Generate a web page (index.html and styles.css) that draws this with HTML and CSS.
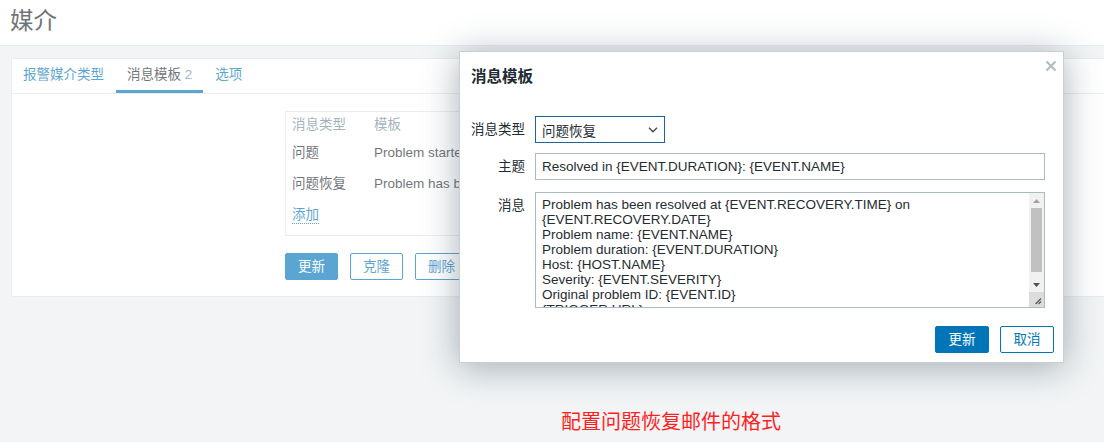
FILE: index.html
```html
<!DOCTYPE html>
<html lang="zh-CN">
<head>
<meta charset="utf-8">
<title>媒介</title>
<link rel="stylesheet" href="styles.css">
</head>
<body>
<header class="page-header">
  <h1 class="page-title">媒介</h1>
</header>
<main class="content">
  <section class="panel">
    <nav class="tabs">
      <a class="tab">报警媒介类型</a>
      <a class="tab tab-active">消息模板 <span class="tab-count">2</span></a>
      <a class="tab">选项</a>
    </nav>
    <div class="panel-body">
      <div class="tpl-box">
        <table class="tpl-table">
          <thead>
            <tr><th class="col-type">消息类型</th><th>模板</th></tr>
          </thead>
          <tbody>
            <tr><td>问题</td><td>Problem started at {EVENT.TIME}</td></tr>
            <tr><td>问题恢复</td><td>Problem has been resolved</td></tr>
            <tr><td colspan="2"><a class="link-add">添加</a></td></tr>
          </tbody>
        </table>
      </div>
      <div class="panel-buttons">
        <button class="btn btn-primary">更新</button>
        <button class="btn btn-alt">克隆</button>
        <button class="btn btn-alt">删除</button>
      </div>
    </div>
  </section>
</main>
<div class="overlay"></div>
<div class="dialog">
  <div class="dialog-head">
    <h2 class="dialog-title">消息模板</h2>
    <button class="dialog-close" aria-label="close">
      <svg width="12" height="12" viewBox="0 0 12 12"><path d="M1.5 1.5 L10.5 10.5 M10.5 1.5 L1.5 10.5" stroke="#b0b9c0" stroke-width="2" fill="none"/></svg>
    </button>
  </div>
  <div class="dialog-body">
    <label class="f-label">消息类型</label>
    <div class="f-field">
      <div class="select">
        <span>问题恢复</span>
        <svg class="chev" width="10" height="6" viewBox="0 0 10 6"><path d="M1 0.8 L5 4.8 L9 0.8" stroke="#3a4a55" stroke-width="1.3" fill="none"/></svg>
      </div>
    </div>
    <label class="f-label">主题</label>
    <div class="f-field">
      <input class="input" type="text" value="Resolved in {EVENT.DURATION}: {EVENT.NAME}">
    </div>
    <label class="f-label">消息</label>
    <div class="f-field">
      <div class="ta-wrap">
        <textarea class="textarea">Problem has been resolved at {EVENT.RECOVERY.TIME} on {EVENT.RECOVERY.DATE}
Problem name: {EVENT.NAME}
Problem duration: {EVENT.DURATION}
Host: {HOST.NAME}
Severity: {EVENT.SEVERITY}
Original problem ID: {EVENT.ID}
{TRIGGER.URL}</textarea>
        <div class="scrollbar" aria-hidden="true">
          <span class="sb-btn">
            <svg width="7" height="4" viewBox="0 0 7 4"><path d="M0 4 L3.5 0 L7 4 Z" fill="#a3a3a3"/></svg>
          </span>
          <span class="sb-track"><span class="sb-thumb"></span></span>
          <span class="sb-btn">
            <svg width="7" height="4" viewBox="0 0 7 4"><path d="M0 0 L3.5 4 L7 0 Z" fill="#505050"/></svg>
          </span>
          <span class="sb-resize">
            <svg width="15" height="15" viewBox="0 0 15 15"><path d="M12 6.5 L6.5 12 M12 9.5 L9.5 12" stroke="#555" stroke-width="1.2" fill="none"/></svg>
          </span>
        </div>
      </div>
    </div>
  </div>
  <div class="dialog-foot">
    <button class="btn btn-primary">更新</button>
    <button class="btn btn-alt">取消</button>
  </div>
</div>
<p class="note">配置问题恢复邮件的格式</p>
</body>
</html>
```
FILE: styles.css
```css
html, body {
  margin: 0;
  padding: 0;
}
body {
  background: #ebeef0;
  font-family: "Liberation Sans", "Noto Sans CJK SC", sans-serif;
  font-size: 13.5px;
  color: #1f2c33;
  width: 1104px;
  height: 442px;
  overflow: hidden;
}
.page-header {
  background: #fff;
  border-bottom: 1px solid #dfe4e7;
  height: 45px;
  display: flex;
  align-items: center;
  padding-left: 10px;
}
.page-title {
  margin: 0;
  font-size: 23.5px;
  font-weight: normal;
  color: #1f2c33;
  line-height: 1;
  position: relative;
  top: -1px;
}
.content {
  padding: 12px 0 0 11px;
}
.panel {
  background: #fff;
  border: 1px solid #dfe4e7;
  border-right: none;
}
.tabs {
  display: flex;
  gap: 1px;
  border-bottom: 1px solid #dfe4e7;
  height: 34px;
}
.tab {
  padding: 0 11px;
  line-height: 31px;
  color: #0275b8;
  border-bottom: 3px solid transparent;
}
.tab-active {
  color: #1f2c33;
  border-bottom-color: #0275b8;
}
.tab-count {
  color: #768d99;
}
.panel-body {
  padding: 17px 0 16px 273px;
}
.tpl-box {
  width: 560px;
  border: 1px solid #dfe4e7;
  padding: 0 6px 5px;
}
.tpl-table {
  border-collapse: collapse;
  width: 100%;
}
.tpl-table th {
  text-align: left;
  font-weight: normal;
  color: #768d99;
  height: 25px;
  line-height: 25px;
  padding: 0;
}
.tpl-table td {
  padding: 0;
  height: 31px;
  line-height: 29px;
}
.col-type {
  width: 82px;
}
.link-add {
  color: #0275b8;
  border-bottom: 1px dotted #0275b8;
  line-height: 16px;
  display: inline-block;
}
.panel-buttons {
  display: flex;
  gap: 12px;
  margin-top: 17px;
}
.btn {
  font-family: inherit;
  font-size: 13.5px;
  height: 27px;
  width: 54px;
  padding: 0;
  border-radius: 2px;
  border: 1px solid #0275b8;
  line-height: 25px;
  cursor: pointer;
}
.panel-buttons .btn {
  width: 53px;
}
.btn-primary {
  background: #0275b8;
  color: #fff;
}
.btn-alt {
  background: #fff;
  color: #0275b8;
}
.overlay {
  position: absolute;
  inset: 0;
  background: rgba(255, 255, 255, 0.35);
}
.dialog {
  position: absolute;
  left: 459px;
  top: 51px;
  width: 603px;
  height: 310px;
  background: #fff;
  border: 1px solid #c8d0d6;
  box-shadow: 0 4px 34px rgba(40, 60, 75, 0.4);
  display: flex;
  flex-direction: column;
}
.dialog-head {
  display: flex;
  justify-content: space-between;
  align-items: flex-start;
  height: 50px;
  padding-left: 11px;
}
.dialog-title {
  margin: 0;
  font-size: 15.5px;
  font-weight: bold;
  line-height: 49px;
}
.dialog-close {
  background: none;
  border: none;
  padding: 0;
  margin: 8px 6px 0 0;
  width: 12px;
  height: 12px;
  display: flex;
}
.dialog-body {
  display: grid;
  grid-template-columns: 54px 510px;
  column-gap: 10px;
  padding: 14px 0 0 11px;
  align-items: start;
}
.f-label {
  text-align: right;
  line-height: 27px;
  white-space: nowrap;
  justify-self: end;
}
.f-field {
  margin-bottom: 10px;
}
.f-field:nth-of-type(2) {
  margin-bottom: 12px;
}
.select {
  width: 130px;
  height: 27px;
  box-sizing: border-box;
  border: 1px solid #1f639c;
  display: flex;
  align-items: center;
  justify-content: space-between;
  padding: 0 6px;
}
.chev {
  margin-top: 1px;
}
.input {
  box-sizing: border-box;
  width: 510px;
  height: 27px;
  border: 1px solid #acbbc2;
  padding: 0 6px;
  font-family: inherit;
  font-size: 13.5px;
  color: #1f2c33;
  outline: none;
  display: block;
}
.ta-wrap {
  position: relative;
  width: 510px;
  height: 116px;
}
.textarea {
  box-sizing: border-box;
  width: 510px;
  height: 116px;
  border: 1px solid #acbbc2;
  padding: 4px 21px 4px 6px;
  font-family: inherit;
  font-size: 13.5px;
  line-height: 15px;
  color: #1f2c33;
  overflow: hidden;
  resize: none;
  display: block;
  margin: 0;
  outline: none;
}
.scrollbar {
  position: absolute;
  top: 1px;
  right: 1px;
  bottom: 1px;
  width: 15px;
  background: #f1f1f1;
  display: flex;
  flex-direction: column;
}
.sb-btn {
  height: 15px;
  flex: none;
  display: flex;
  align-items: center;
  justify-content: center;
}
.sb-track {
  flex: 1;
  display: flex;
  flex-direction: column;
}
.sb-thumb {
  height: 64px;
  margin: 0 2px;
  background: #c1c1c1;
}
.sb-resize {
  height: 15px;
  flex: none;
  background: #dcdcdc;
  display: flex;
}
.dialog-foot {
  margin-top: auto;
  display: flex;
  justify-content: flex-end;
  gap: 11px;
  padding: 0 9px 9px 0;
}
.note {
  position: absolute;
  left: 561px;
  top: 408px;
  margin: 0;
  font-size: 20px;
  line-height: 28px;
  color: #ff1f1f;
}
```
